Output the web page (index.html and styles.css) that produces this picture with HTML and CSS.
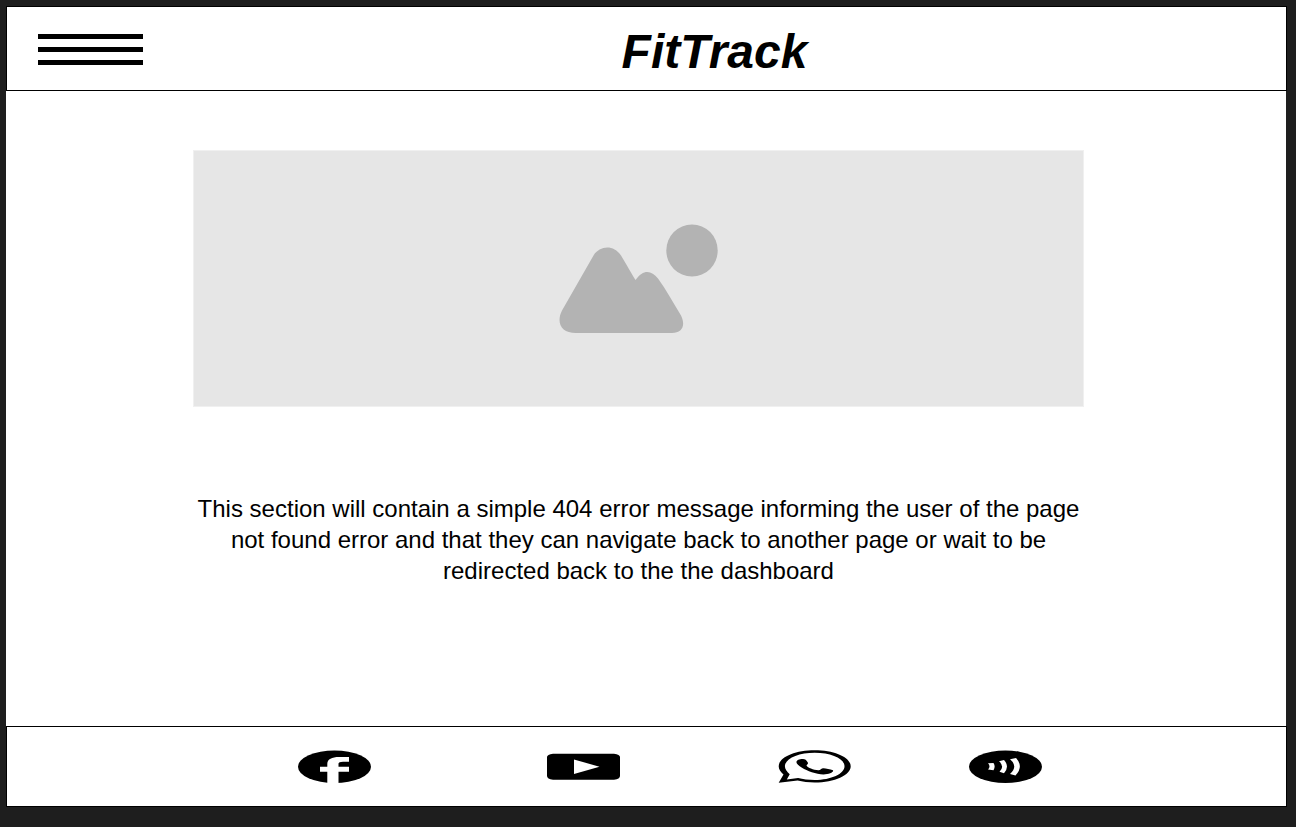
FILE: index.html
```html
<!DOCTYPE html>
<html lang="en">
<head>
<meta charset="utf-8">
<title>FitTrack</title>
<link rel="stylesheet" href="styles.css">
</head>
<body>
<header class="header">
  <button class="menu" type="button" aria-label="Menu">
    <span class="menu-bar"></span>
    <span class="menu-bar"></span>
    <span class="menu-bar"></span>
  </button>
  <h1 class="title">FitTrack</h1>
</header>
<main class="main">
  <div class="placeholder">
    <svg class="placeholder-art" viewBox="0 0 160 110" role="img" aria-label="Image placeholder">
      <path d="M34.500 31C41 21 54.500 20 62 31C67 39 70 45 76.500 55.500C84 45 92 45 99 54C107 65 114 78 122 91C127 101 123 108.500 113 108.500H17C2 108.500 -3 98 3 86Z"/>
      <ellipse cx="133" cy="26" rx="25.700" ry="26"/>
    </svg>
  </div>
  <p class="message">This section will contain a simple 404 error message informing the user of the page not found error and that they can navigate back to another page or wait to be redirected back to the the dashboard</p>
</main>
<footer class="footer">
  <a class="social facebook" href="#" aria-label="Facebook">
    <svg class="icon" viewBox="0 0 73 33">
      <ellipse cx="36.500" cy="16.700" rx="36.500" ry="16.300"/>
      <path class="cut" d="M29.300 33V21.700H22V16.700H29.300V14C29.300 9 34 7 41 7H51V11.700H45C42 11.700 40.500 12.500 40.500 14V16.700H51V21.700H40.500V33Z"/>
    </svg>
  </a>
  <a class="social youtube" href="#" aria-label="YouTube">
    <svg class="icon" viewBox="0 0 73 33">
      <path d="M6 3.700H67Q73 4.500 73 7V26Q73 29 67 29.700H6Q0 29 0 26V7Q0 4.500 6 3.700Z"/>
      <path class="cut" d="M27 9.500L52.500 16.700L27 24Z"/>
    </svg>
  </a>
  <a class="social whatsapp" href="#" aria-label="WhatsApp">
    <svg class="icon" viewBox="0 0 73 33">
      <path fill-rule="evenodd" d="M.700 32.800L5.500 24.500C2.500 22 .700 19.200 .700 16.300C.700 7.300 16.800 .200 36.700 .200S72.700 7.300 72.700 16.300S56.600 32.600 36.700 32.600C30.500 32.600 24.700 31.900 19.600 30.600ZM8.800 29.400L20.100 28.100C24.800 29.300 30.500 30 36.700 30C53.200 30 66.500 23.900 66.500 16.300S53.200 2.800 36.700 2.800S6.900 8.800 6.900 16.300C6.900 19 8.800 21.800 11.700 24.200Z"/>
      <path d="M18.500 12C18.500 10 22 8.800 25 9C27 9.100 28.500 10 29.800 12.500C30.600 14 28.500 14.500 28.500 15.500C30 18 35 19.700 40.500 20.300C42.500 20 43.500 18 45.500 18.200C48 18.400 52 19.200 55 20.200C56 22 51 24.300 45.500 24.400C38 24.300 29 21 24 17.800C20.500 15.500 18.200 14 18.500 12Z"/>
    </svg>
  </a>
  <a class="social podcast" href="#" aria-label="Podcast">
    <svg class="icon" viewBox="0 0 73 33">
      <ellipse cx="36.500" cy="16.700" rx="36.500" ry="16.300"/>
      <path class="cut" d="M19 13.300L24.500 13Q26.800 16.500 24.500 20.300L19 19.500Q22 16.500 19 13.300ZM30 11.300L35 10Q41 16.500 35 23.300L30.500 21.700Q36 16.500 30 11.300ZM41 9.300L47 8Q55 16.500 46.500 25.500L41 24Q49.500 16.500 41 9.300Z"/>
    </svg>
  </a>
</footer>
</body>
</html>
```
FILE: styles.css
```css
* {
  box-sizing: border-box;
}

body {
  display: flex;
  flex-direction: column;
  min-height: 100vh;
  margin: 0;
  padding: 6px 9px 20px 6px;
  background: #1e1e1e;
  color: #000;
  font-family: "Liberation Sans", Arial, sans-serif;
}

.header {
  display: flex;
  align-items: center;
  padding: 17px 0 11px;
  border: 1px solid #000;
  background: #fff;
}

.menu {
  display: flex;
  flex-direction: column;
  gap: 8px;
  width: 105px;
  margin: 0 0 4px 31px;
  padding: 0;
  border: 0;
  background: none;
  cursor: pointer;
}

.menu-bar {
  width: 100%;
  height: 5px;
  background: #000;
}

.title {
  flex: 1;
  margin: 0;
  font-size: 48px;
  font-style: italic;
  line-height: 55px;
  text-align: center;
}

.main {
  flex: 1;
  margin-right: 1px;
  padding: 59px 202px 59px 187px;
  background: #fff;
}

.placeholder {
  display: flex;
  justify-content: center;
  padding: 73px 0 71px;
  border: 1px solid #f0f0f0;
  background: #e6e6e6;
}

.placeholder-art {
  display: block;
  width: 160px;
  height: 111px;
  fill: #b3b3b3;
}

.message {
  margin: 86px 0 0;
  font-size: 24px;
  line-height: 31px;
  text-align: center;
}

.footer {
  display: flex;
  justify-content: center;
  padding: 23px 0 23px 47px;
  border: 1px solid #000;
  background: #fff;
}

.social {
  display: block;
  color: #000;
}

.facebook {
  margin-right: 176px;
}

.youtube {
  margin-right: 158px;
}

.whatsapp {
  margin-right: 118px;
}

.icon {
  display: block;
  width: 73px;
  height: 33px;
  fill: currentColor;
}

.cut {
  fill: #fff;
}
```
